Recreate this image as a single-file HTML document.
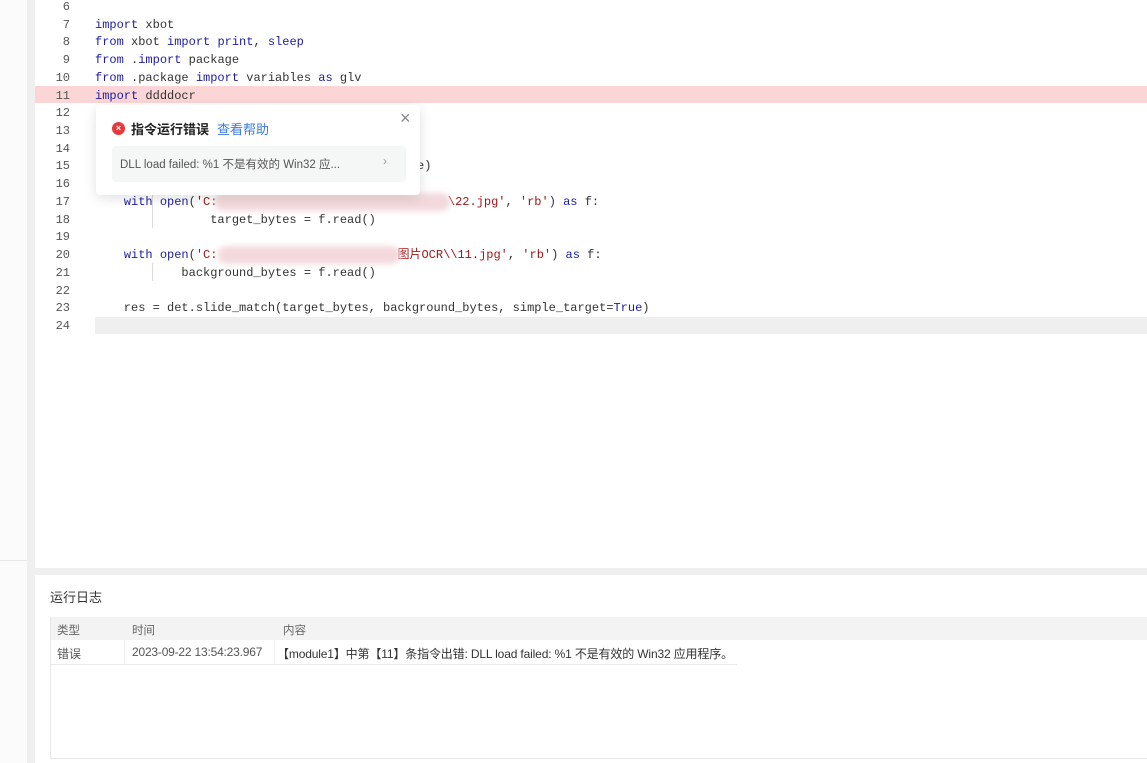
<!DOCTYPE html><html><head><meta charset="utf-8"><style>
body{margin:0;width:1147px;height:763px;overflow:hidden;background:#fff;font-family:"Liberation Sans","Noto Sans CJK SC",sans-serif;position:relative}
.a{position:absolute}
.code{position:absolute;left:0;top:-1px;font-family:"Liberation Mono","Noto Sans CJK SC",monospace;font-size:12px;line-height:17.72px;color:#333;white-space:pre}
.ln{position:absolute;left:40px;width:30px;text-align:right;color:#555}
.tx{position:absolute;left:95px}
.k{color:#1c1ca8}.s{color:#a31515}
.blur{position:absolute;height:18px;background:#f3d9dc;filter:blur(3px);border-radius:8px}
</style></head><body>
<div class="a" style="left:0;top:0;width:27px;height:763px;background:#fbfbfb"></div>
<div class="a" style="left:0;top:560px;width:27px;height:1px;background:#e8e8e8"></div>
<div class="a" style="left:27px;top:0;width:8px;height:763px;background:#efefef"></div>
<div class="a" style="left:35px;top:86px;width:1112px;height:17px;background:#fcd6d6"></div>
<div class="a" style="left:95px;top:317px;width:1052px;height:17px;background:#efefef"></div>
<div class="a" style="left:152px;top:192px;width:1px;height:36px;background:#ddd"></div>
<div class="a" style="left:152px;top:263px;width:1px;height:18px;background:#ddd"></div>
<div class="code">
<div class="ln" style="top:0">6</div>
<div class="ln" style="top:17.72px">7</div><div class="tx" style="top:17.72px"><span class="k">import</span> xbot</div>
<div class="ln" style="top:35.44px">8</div><div class="tx" style="top:35.44px"><span class="k">from</span> xbot <span class="k">import print</span>, <span class="k">sleep</span></div>
<div class="ln" style="top:53.16px">9</div><div class="tx" style="top:53.16px"><span class="k">from</span> .<span class="k">import</span> package</div>
<div class="ln" style="top:70.88px">10</div><div class="tx" style="top:70.88px"><span class="k">from</span> .package <span class="k">import</span> variables <span class="k">as</span> glv</div>
<div class="ln" style="top:88.6px">11</div><div class="tx" style="top:88.6px"><span class="k">import</span> ddddocr</div>
<div class="ln" style="top:106.32px">12</div>
<div class="ln" style="top:124.04px">13</div>
<div class="ln" style="top:141.76px">14</div>
<div class="ln" style="top:159.48px">15</div><div class="tx" style="top:159.48px;left:417px">e)</div>
<div class="ln" style="top:177.2px">16</div>
<div class="ln" style="top:194.92px">17</div><div class="tx" style="top:194.92px">    <span class="k">with open</span>(<span class="s">'C:</span>                                <span class="s">\22.jpg'</span>, <span class="s">'rb'</span>) <span class="k">as</span> f:</div>
<div class="ln" style="top:212.64px">18</div><div class="tx" style="top:212.64px">                target_bytes = f.read()</div>
<div class="ln" style="top:230.36px">19</div>
<div class="ln" style="top:248.08px">20</div><div class="tx" style="top:248.08px">    <span class="k">with open</span>(<span class="s">'C:</span>                         <span class="s">图片OCR\\11.jpg'</span>, <span class="s">'rb'</span>) <span class="k">as</span> f:</div>
<div class="ln" style="top:265.8px">21</div><div class="tx" style="top:265.8px">            background_bytes = f.read()</div>
<div class="ln" style="top:283.52px">22</div>
<div class="ln" style="top:301.24px">23</div><div class="tx" style="top:301.24px">    res = det.slide_match(target_bytes, background_bytes, simple_target=<span class="k">True</span>)</div>
<div class="ln" style="top:318.96px">24</div>
</div>
<div class="blur" style="left:215px;top:193px;width:235px"></div>
<div class="blur" style="left:218px;top:246px;width:182px"></div>
<div class="a" style="left:96px;top:105px;width:324px;height:90px;background:#fff;box-shadow:0 3px 12px rgba(0,0,0,.12);border-radius:4px"></div>
<div class="a" style="left:400px;top:108px;font-size:18px;color:#888">×</div>
<div class="a" style="left:112px;top:122px;width:13px;height:13px;border-radius:50%;background:#e8383d;color:#fff;font-size:9px;line-height:13px;text-align:center;font-weight:bold">×</div>
<div class="a" style="left:131px;top:119px;font-size:13px;font-weight:bold;color:#222">指令运行错误</div>
<div class="a" style="left:217px;top:119px;font-size:13px;color:#3a7be0">查看帮助</div>
<div class="a" style="left:112px;top:146px;width:294px;height:36px;background:#f5f6f6;border-radius:4px"></div>
<div class="a" style="left:120px;top:156px;font-size:11.5px;color:#555">DLL load failed: %1 不是有效的 Win32 应...</div>
<div class="a" style="left:383px;top:154px;font-size:12px;color:#999">›</div>
<div class="a" style="left:35px;top:568px;width:1112px;height:7px;background:#efefef"></div>
<div class="a" style="left:50px;top:587px;font-size:13px;color:#333">运行日志</div>
<div class="a" style="left:50px;top:617px;width:1097px;height:141px;border-left:1px solid #e8e8e8;border-bottom:1px solid #e8e8e8"></div>
<div class="a" style="left:51px;top:617px;width:1096px;height:23px;background:#f3f3f3"></div>
<div class="a" style="left:51px;top:664px;width:686px;height:1px;background:#eaeaea"></div>
<div class="a" style="left:124px;top:640px;width:1px;height:24px;background:#eee"></div>
<div class="a" style="left:274px;top:640px;width:1px;height:24px;background:#eee"></div>
<div class="a" style="left:57px;top:622px;font-size:11.5px;color:#666">类型</div>
<div class="a" style="left:132px;top:622px;font-size:11.5px;color:#666">时间</div>
<div class="a" style="left:283px;top:622px;font-size:11.5px;color:#666">内容</div>
<div class="a" style="left:57px;top:645px;font-size:12px;color:#555">错误</div>
<div class="a" style="left:132px;top:645px;font-size:12px;color:#555;letter-spacing:-0.2px">2023-09-22 13:54:23.967</div>
<div class="a" style="left:277px;top:645px;font-size:12px;color:#333;letter-spacing:-0.15px">【module1】中第【11】条指令出错:  DLL load failed: %1 不是有效的 Win32 应用程序。</div>
</body></html>
